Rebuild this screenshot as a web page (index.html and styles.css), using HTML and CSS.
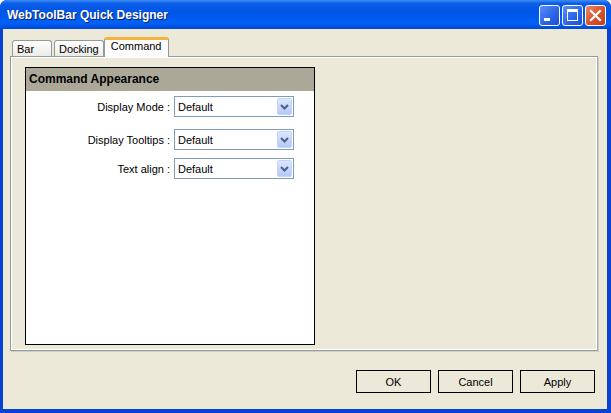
FILE: index.html
```html
<!DOCTYPE html>
<html lang="en">
<head>
  <meta charset="UTF-8">
  <title>WebToolBar Quick Designer</title>
  <link rel="stylesheet" href="styles.css">
</head>
<body>
  <div class="window">
    <div class="titlebar">
      <span class="title">WebToolBar Quick Designer</span>
      <div class="caption-btns">
        <button class="cap-btn"><span class="ico-min"></span></button>
        <button class="cap-btn"><span class="ico-max"></span></button>
        <button class="cap-btn close-btn">
          <svg width="13" height="13" viewBox="0 0 13 13"><path d="M2 2 L11 11 M11 2 L2 11" stroke="#fff" stroke-width="2.2" stroke-linecap="square"/></svg>
        </button>
      </div>
    </div>

    <div class="client">
      <div class="tabs">
        <div class="tab">Bar</div>
        <div class="tab">Docking</div>
        <div class="tab active">Command</div>
      </div>
      <div class="tab-panel">
        <div class="group">
          <div class="group-head">Command Appearance</div>
          <div class="group-body">
            <div class="row">
              <label>Display Mode :</label>
              <div class="combo"><span>Default</span><i class="drop"><svg width="9" height="6" viewBox="0 0 9 6"><path d="M1 1 L4.5 4.5 L8 1" stroke="#4d6185" stroke-width="2" fill="none"/></svg></i></div>
            </div>
            <div class="row">
              <label>Display Tooltips :</label>
              <div class="combo"><span>Default</span><i class="drop"><svg width="9" height="6" viewBox="0 0 9 6"><path d="M1 1 L4.5 4.5 L8 1" stroke="#4d6185" stroke-width="2" fill="none"/></svg></i></div>
            </div>
            <div class="row tight">
              <label>Text align :</label>
              <div class="combo"><span>Default</span><i class="drop"><svg width="9" height="6" viewBox="0 0 9 6"><path d="M1 1 L4.5 4.5 L8 1" stroke="#4d6185" stroke-width="2" fill="none"/></svg></i></div>
            </div>
          </div>
        </div>
      </div>
      <div class="buttons">
        <button class="btn">OK</button>
        <button class="btn">Cancel</button>
        <button class="btn">Apply</button>
      </div>
    </div>
  </div>
</body>
</html>
```

FILE: styles.css
```css
body {
  margin: 0;
  width: 611px;
  height: 413px;
  overflow: hidden;
  font-family: "Liberation Sans", Arial, sans-serif;
  font-size: 11px;
  background: #ffffff;
}
.window {
  width: 611px;
  height: 413px;
  box-sizing: border-box;
  background: #0842d4;
  border-radius: 7px 7px 0 0;
  padding: 0 4px 4px 3px;
  display: flex;
  flex-direction: column;
}
.titlebar {
  height: 29px;
  margin: 0 -4px 0 -3px;
  padding: 0 5px 0 7px;
  border-radius: 7px 7px 0 0;
  background: linear-gradient(#3d8cf5 0%, #0a5ee8 12%, #0055e5 40%, #0061f7 80%, #0052e0 92%, #0346d3 100%);
  display: flex;
  align-items: center;
  justify-content: space-between;
}
.title {
  color: #fff;
  font-weight: bold;
  font-size: 12px;
  font-family: "Liberation Sans", Arial, sans-serif;
  text-shadow: 1px 1px 0 #0a1f6a;
  padding-top: 1px;
}
.caption-btns {
  display: flex;
  gap: 2px;
  margin-top: 1px;
}
.cap-btn {
  width: 21px;
  height: 21px;
  border: 1px solid #fff;
  border-radius: 3px;
  background: linear-gradient(135deg, #5a8ff7 0%, #2a63e6 60%, #1b4fd8 100%);
  padding: 0;
  display: flex;
  align-items: center;
  justify-content: center;
}
.close-btn {
  background: linear-gradient(135deg, #e98a6e 0%, #d9542e 50%, #c3401c 100%);
}
.ico-min {
  width: 6px;
  height: 3px;
  background: #fff;
  margin: 9px 6px 0 0;
}
.ico-max {
  width: 9px;
  height: 8px;
  border: 1px solid #fff;
  border-top-width: 3px;
}
.client {
  flex: 1;
  background: #ece9d8;
  padding: 8px 7px 0 7px;
  display: flex;
  flex-direction: column;
}
.tabs {
  display: flex;
  align-items: flex-end;
  height: 19px;
  padding-left: 2px;
  gap: 2px;
}
.tab {
  height: 16px;
  box-sizing: border-box;
  border: 1px solid #919b9c;
  border-bottom: none;
  border-radius: 3px 3px 0 0;
  background: linear-gradient(#fefefe, #ecebe6);
  padding: 2px 4px 0 4px;
  color: #000;
}
.tab:first-child {
  width: 40px;
}
.tab.active {
  height: 20px;
  background: #fcfcfe;
  border-top: 3px solid #f4b43c;
  padding: 0 6px 0 6px;
  margin-bottom: -1px;
  margin-left: -2px;
  position: relative;
  z-index: 1;
}
.tab-panel {
  height: 295px;
  border: 1px solid #919b9c;
  border-right-color: #a3a8ab;
  box-shadow: inset 1px 1px 0 #fff, inset -1px -1px 0 #fff, 1px 1px 0 #d0d0c8;
  background: #ece9d8;
  padding: 10px 14px;
  box-sizing: border-box;
  margin-right: 2px;
}
.group {
  width: 290px;
  height: 278px;
  box-sizing: border-box;
  border: 1px solid #000;
  background: #fff;
}
.group-head {
  height: 23px;
  line-height: 23px;
  background: #aba898;
  font-weight: bold;
  font-size: 12px;
  padding-left: 3px;
  color: #000;
}
.group-body {
  padding-top: 5px;
}
.row {
  display: flex;
  align-items: center;
  height: 21px;
  margin-bottom: 12px;
}
.row.tight {
  margin-top: -4px;
}
.row label {
  width: 144px;
  text-align: right;
  padding-right: 4px;
  color: #000;
}
.combo {
  width: 120px;
  height: 21px;
  box-sizing: border-box;
  border: 1px solid #7f9db9;
  display: flex;
  align-items: center;
  justify-content: space-between;
  padding: 0 1px 0 3px;
}
.drop {
  width: 15px;
  height: 17px;
  border-radius: 2px;
  background: linear-gradient(#dce7fd, #b5c8f7);
  border: 1px solid #c3d3fd;
  box-sizing: border-box;
  display: flex;
  align-items: center;
  justify-content: center;
}
.buttons {
  display: flex;
  justify-content: flex-end;
  gap: 7px;
  padding: 19px 5px 0 0;
}
.btn {
  width: 75px;
  height: 23px;
  border: 1px solid #000;
  background: #ece9d8;
  font-family: "Liberation Sans", Arial, sans-serif;
  font-size: 11px;
  color: #000;
  padding: 0;
}
```
